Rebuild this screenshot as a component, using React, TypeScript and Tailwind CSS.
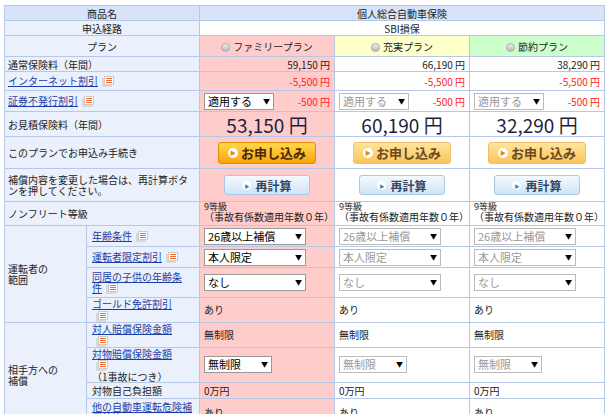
import React from 'react'

const B = 'border border-[#b7c8e6]'
const LBL = `${B} bg-[#eaf1fc] px-[3px] text-left align-middle`
const LBL2 = `${B} bg-[#eaf1fc] pl-[5px] pr-[16px] text-left align-middle`
const PINK = `${B} bg-[#ffcccc] px-[4px]`
const WH = `${B} bg-white px-[4px]`

function Ic() {
  return (
    <span className="relative inline-block w-[12px] h-[11px] align-middle ml-[4px]">
      <span className="absolute left-0 top-[2px] w-[10px] h-[9px] bg-[#d8d8d8]" />
      <span className="absolute left-[2px] top-0 w-[10px] h-[9px] bg-white border border-[#ccc] flex flex-col justify-center items-center gap-[1px]">
        <span className="block w-[6px] h-[1px] bg-[#f06a2a]" />
        <span className="block w-[6px] h-[1px] bg-[#f06a2a]" />
        <span className="block w-[6px] h-[1px] bg-[#f06a2a]" />
      </span>
    </span>
  )
}

function L({ children, icon = true }: { children: React.ReactNode; icon?: boolean }) {
  return (
    <span>
      <a className="text-[#1a3fa8] underline">{children}</a>
      {icon && <Ic />}
    </span>
  )
}

function Sel({ v, w, dis }: { v: string; w: number; dis?: boolean }) {
  return (
    <span
      className={`inline-flex items-center justify-between h-[17px] border bg-white px-[3px] text-[11px] ${dis ? 'border-[#bbb] text-[#999]' : 'border-[#999] text-black'}`}
      style={{ width: w }}
    >
      <span>{v}</span>
      <span className="text-[7px] text-black">▼</span>
    </span>
  )
}

function Apply({ active }: { active: boolean }) {
  return (
    <span className={`inline-flex items-center justify-center gap-[3px] w-[98px] h-[22px] rounded-[3px] text-[13px] font-bold ${active ? 'bg-gradient-to-b from-[#ffd84a] to-[#f5a500] border border-[#e08d00] text-[#4a2a00]' : 'bg-gradient-to-b from-[#ffe49a] to-[#f8c55a] border border-[#f0c070] text-[#6a4a20]'}`}>
      <span className="w-[10px] h-[10px] rounded-full bg-white text-[#e08d00] text-[6px] flex items-center justify-center">▶</span>
      お申し込み
    </span>
  )
}

function Recalc() {
  return (
    <span className="inline-flex items-center justify-center gap-[4px] w-[86px] h-[20px] rounded-[3px] bg-gradient-to-b from-[#f4f9fe] to-[#cfe4f6] border border-[#a9c8e4] text-[12px] font-bold text-[#33475e]">
      <span className="w-[9px] h-[9px] rounded-full bg-white text-[#3b7fc4] text-[5px] flex items-center justify-center">▶</span>
      再計算
    </span>
  )
}

const Radio = () => <span className="inline-block w-[9px] h-[9px] rounded-full bg-gradient-to-b from-[#eee] to-[#bbb] border border-[#aaa] mr-[3px] align-[-1px]" />

export default function App() {
  const plans = ['ファミリープラン', '充実プラン', '節約プラン']
  const planBg = ['bg-[#ffcccc]', 'bg-[#ffffcc]', 'bg-[#ccffcc]']
  const normal = ['59,150', '66,190', '38,290']
  const est = ['53,150', '60,190', '32,290']
  const cell = (i: number) => (i === 0 ? PINK : WH)
  return (
    <div className="w-[608px] h-[414px] overflow-hidden bg-white pt-[5px] pl-[4px]" style={{ fontFamily: '"Noto Sans CJK JP", sans-serif' }}>
      <table className="border-collapse table-fixed w-[600px] text-[10px] leading-[11px] text-[#222]">
        <colgroup>
          <col style={{ width: 82 }} />
          <col style={{ width: 113 }} />
          <col style={{ width: 135 }} />
          <col style={{ width: 135 }} />
          <col style={{ width: 135 }} />
        </colgroup>
        <tbody>
          <tr className="h-[15px]">
            <td colSpan={2} className={`${B} bg-[#d6e3f8] text-center`}>商品名</td>
            <td colSpan={3} className={`${B} bg-[#d6e3f8] text-center`}>個人総合自動車保険</td>
          </tr>
          <tr className="h-[15px]">
            <td colSpan={2} className={`${B} bg-[#eaf1fc] text-center`}>申込経路</td>
            <td colSpan={3} className={`${B} bg-white text-center`}>SBI損保</td>
          </tr>
          <tr className="h-[21px]">
            <td colSpan={2} className={`${B} bg-[#eaf1fc] text-center`}>プラン</td>
            {plans.map((p, i) => (
              <td key={p} className={`${B} ${planBg[i]} text-center`}><Radio />{p}</td>
            ))}
          </tr>
          <tr className="h-[15px]">
            <td colSpan={2} className={LBL}>通常保険料（年間）</td>
            {normal.map((n, i) => (
              <td key={n} className={`${cell(i)} text-right`}>{n} 円</td>
            ))}
          </tr>
          <tr className="h-[19px]">
            <td colSpan={2} className={LBL}><L>インターネット割引</L></td>
            {[0, 1, 2].map((i) => (
              <td key={i} className={`${cell(i)} text-right text-[#ff1a1a]`}>-5,500 円</td>
            ))}
          </tr>
          <tr className="h-[21px]">
            <td colSpan={2} className={LBL}><L>証券不発行割引</L></td>
            {[0, 1, 2].map((i) => (
              <td key={i} className={cell(i)}>
                <div className="flex items-center justify-between">
                  <Sel v="適用する" w={70} dis={i > 0} />
                  <span className="text-[#ff1a1a]">-500 円</span>
                </div>
              </td>
            ))}
          </tr>
          <tr className="h-[25px]">
            <td colSpan={2} className={LBL}>お見積保険料（年間）</td>
            {est.map((n, i) => (
              <td key={n} className={`${cell(i)} text-center text-[19px] text-[#1f1f3a]`}>{n} 円</td>
            ))}
          </tr>
          <tr className="h-[32px]">
            <td colSpan={2} className={LBL}>このプランでお申込み手続き</td>
            {[0, 1, 2].map((i) => (
              <td key={i} className={`${cell(i)} text-center`}><Apply active={i === 0} /></td>
            ))}
          </tr>
          <tr className="h-[33px]">
            <td colSpan={2} className={LBL}>補償内容を変更した場合は、再計算ボタンを押してください。</td>
            {[0, 1, 2].map((i) => (
              <td key={i} className={`${cell(i)} text-center`}><Recalc /></td>
            ))}
          </tr>
          <tr className="h-[24px]">
            <td colSpan={2} className={LBL}>ノンフリート等級</td>
            {[0, 1, 2].map((i) => (
              <td key={i} className={`${cell(i)} text-left align-top`}>
                <div className="text-[9px] leading-[9px]">9等級</div>
                <div className="text-[10px] leading-[11px] whitespace-nowrap">（事故有係数適用年数０年）</div>
              </td>
            ))}
          </tr>
          <tr className="h-[21px]">
            <td rowSpan={4} className={LBL}>運転者の<br />範囲</td>
            <td className={LBL2}><L>年齢条件</L></td>
            {[0, 1, 2].map((i) => (
              <td key={i} className={cell(i)}><Sel v="26歳以上補償" w={102} dis={i > 0} /></td>
            ))}
          </tr>
          <tr className="h-[21px]">
            <td className={LBL2}><L>運転者限定割引</L></td>
            {[0, 1, 2].map((i) => (
              <td key={i} className={cell(i)}><Sel v="本人限定" w={102} dis={i > 0} /></td>
            ))}
          </tr>
          <tr className="h-[30px]">
            <td className={LBL2}><L>同居の子供の年齢条件</L></td>
            {[0, 1, 2].map((i) => (
              <td key={i} className={cell(i)}><Sel v="なし" w={102} dis={i > 0} /></td>
            ))}
          </tr>
          <tr className="h-[19px]">
            <td className={LBL2}><L>ゴールド免許割引</L></td>
            {[0, 1, 2].map((i) => (
              <td key={i} className={cell(i)}>あり</td>
            ))}
          </tr>
          <tr className="h-[19px]">
            <td rowSpan={4} className={LBL}>相手方への<br />補償</td>
            <td className={LBL2}><L>対人賠償保険金額</L></td>
            {[0, 1, 2].map((i) => (
              <td key={i} className={cell(i)}>無制限</td>
            ))}
          </tr>
          <tr className="h-[29px]">
            <td className={LBL2}><L>対物賠償保険金額</L><br />（1事故につき）</td>
            {[0, 1, 2].map((i) => (
              <td key={i} className={cell(i)}><Sel v="無制限" w={68} dis={i > 0} /></td>
            ))}
          </tr>
          <tr className="h-[16px]">
            <td className={LBL2}>対物自己負担額</td>
            {[0, 1, 2].map((i) => (
              <td key={i} className={cell(i)}>0万円</td>
            ))}
          </tr>
          <tr className="h-[28px]">
            <td className={`${B} bg-[#eaf1fc] pl-[5px] pr-[4px] text-left`}><L>他の自動車運転危険補償特約</L></td>
            {[0, 1, 2].map((i) => (
              <td key={i} className={cell(i)}>あり</td>
            ))}
          </tr>
          <tr className="h-[20px]">
            <td className={LBL}></td>
            <td className={LBL2}></td>
            {[0, 1, 2].map((i) => (
              <td key={i} className={cell(i)}></td>
            ))}
          </tr>
        </tbody>
      </table>
    </div>
  )
}
